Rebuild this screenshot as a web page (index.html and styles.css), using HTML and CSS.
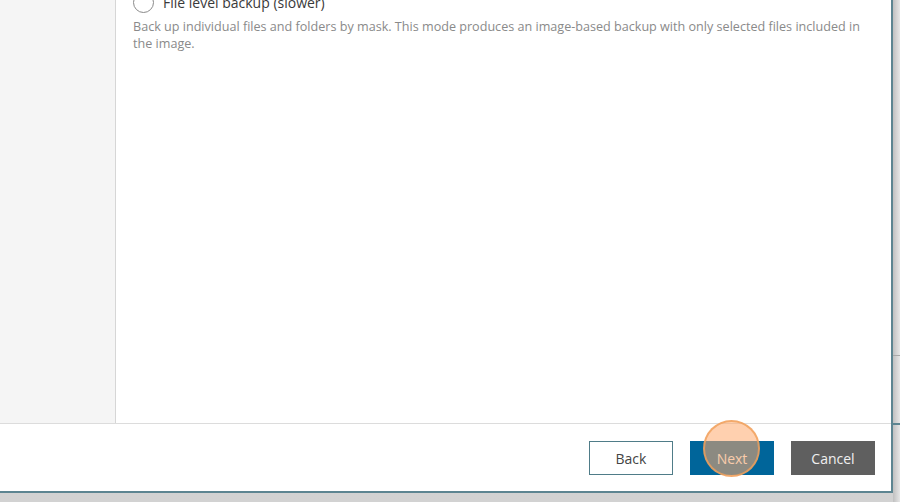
FILE: index.html
```html
<!DOCTYPE html>
<html lang="en">
<head>
<meta charset="utf-8">
<title>Backup Job Wizard</title>
<link rel="stylesheet" href="styles.css">
</head>
<body>
<div class="desk">
  <div class="wizard">
    <div class="wizard-main">
      <aside class="steps"></aside>
      <section class="page">
        <label class="option">
          <span class="radio"></span>
          <span class="option-title">File level backup (slower)</span>
        </label>
        <p class="option-desc">Back up individual files and folders by mask. This mode produces an image-based backup with only selected files included in the image.</p>
      </section>
    </div>
    <footer class="wizard-footer">
      <button class="btn btn-back">Back</button>
      <span class="btn-wrap">
        <button class="btn btn-next">Next</button>
        <span class="click-mark"></span>
      </span>
      <button class="btn btn-cancel">Cancel</button>
    </footer>
  </div>
  <div class="behind">
    <span class="behind-line l1"></span>
    <span class="behind-line l2"></span>
  </div>
</div>
</body>
</html>
```
FILE: styles.css
```css
* { box-sizing: border-box; }

html, body {
  margin: 0;
  height: 100%;
}

body {
  background: linear-gradient(#c9c9c9, #d2d2d2);
  font-family: "Open Sans", "Liberation Sans", sans-serif;
  overflow: hidden;
}

.desk {
  display: flex;
  height: 502px;
}

.wizard {
  width: 893px;
  height: 493px;
  background: #fff;
  border-right: 2px solid #5d8591;
  border-bottom: 2px solid #5d8591;
  display: flex;
  flex-direction: column;
  flex: none;
}

.wizard-main {
  height: 424px;
  display: flex;
  border-bottom: 1px solid #dcdcdc;
  flex: none;
}

.steps {
  width: 116px;
  background: #f5f5f5;
  border-right: 1px solid #d6d6d6;
  flex: none;
}

.page {
  flex: 1;
  padding: 0 20px 0 17px;
  overflow: hidden;
}

.option {
  display: flex;
  align-items: center;
  gap: 9px;
  margin-top: -9px;
  height: 22px;
}

.radio {
  width: 21px;
  height: 21px;
  border: 1.5px solid #8a8a8a;
  border-radius: 50%;
  background: #fff;
  flex: none;
}

.option-title {
  font-size: 14px;
  color: #3a3a3a;
}

.option-desc {
  margin: 5px 0 0;
  font-size: 12.6px;
  line-height: 17px;
  color: #8a8a8a;
}

.wizard-footer {
  flex: 1;
  display: flex;
  justify-content: flex-end;
  align-items: flex-start;
  padding: 17px 16px 0 0;
  gap: 17px;
}

.btn {
  width: 84px;
  height: 34px;
  font-family: inherit;
  font-size: 14px;
  border: 1px solid transparent;
  padding: 0;
}

.btn-back {
  background: #fff;
  color: #444;
  border-color: #4f7c88;
}

.btn-wrap {
  position: relative;
  display: block;
}

.btn-next {
  background: #00659a;
  color: #f4f4f4;
  display: block;
}

.btn-cancel {
  background: #5f5f5f;
  color: #f0f0f0;
}

.click-mark {
  position: absolute;
  left: 13px;
  top: -21px;
  width: 57px;
  height: 57px;
  border-radius: 50%;
  background: rgba(255, 170, 110, 0.55);
  border: 2px solid rgba(240, 160, 90, 0.8);
}

.behind {
  flex: 1;
  position: relative;
  background: linear-gradient(90deg, #c0c0c0, #e6e6e6);
}

.behind-line {
  position: absolute;
  left: 0;
  right: 0;
  height: 1px;
}

.behind-line.l1 { top: 355px; background: #a8a8a8; }
.behind-line.l2 { top: 423px; height: 2px; background: #5d8591; }
```
